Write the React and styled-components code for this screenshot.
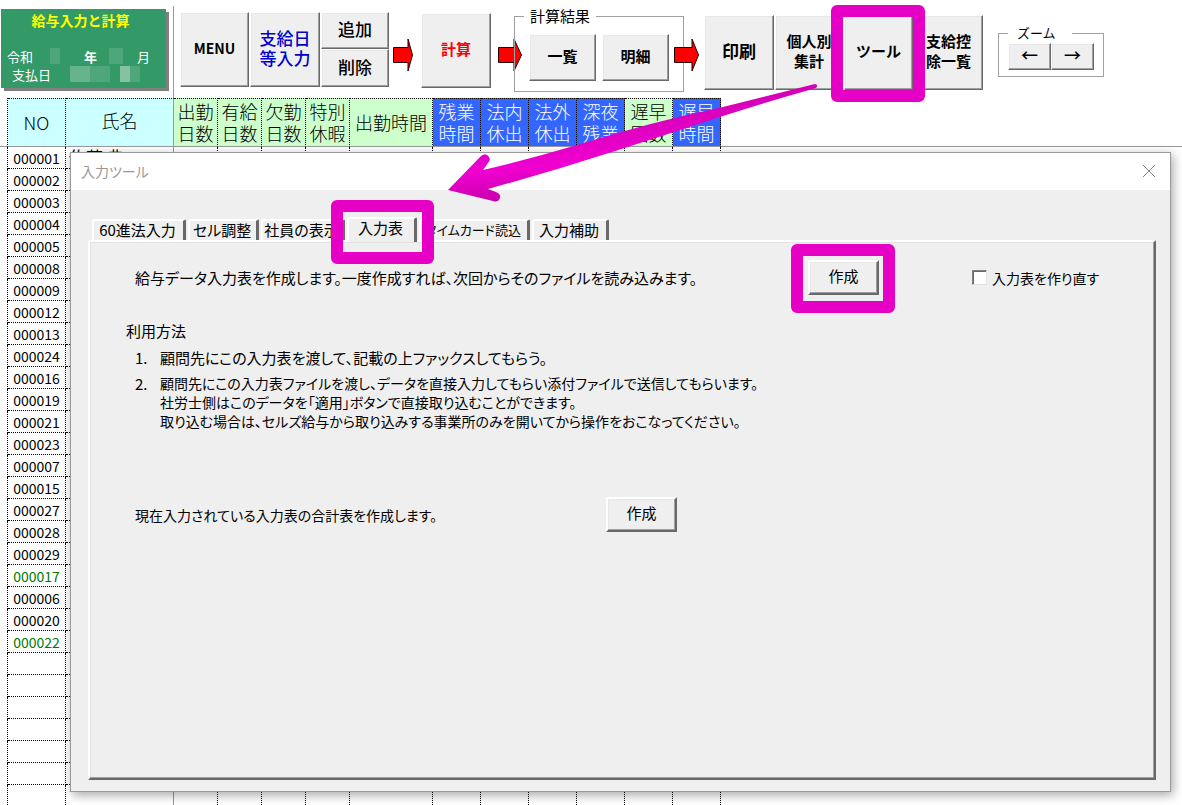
import React, {useState} from "react"
import styled, {createGlobalStyle} from "styled-components";

const GlobalStyle = createGlobalStyle`
* { box-sizing: border-box; }
html, body, #root { height: 100%; }
body {
  margin: 0;
  overflow: hidden;
  background: #fff;
  color: #000;
  font-family: "Noto Sans CJK JP", "Liberation Sans", sans-serif;
}
button, input, legend { font-family: inherit; }
`

const Page = styled.div`
position: relative;
height: 100%;
overflow: hidden;
`

const Toolbar = styled.header`
display: flex;
align-items: flex-start;
height: 98px;
padding-top: 6px;
white-space: nowrap;
`

const CardArea = styled.div`
flex: none;
width: 174px;
height: 100%;
padding: 3px 0 0 1px;
border-right: 1px solid #999;
`

const Card = styled.div`
width: 165px;
height: 79px;
padding-top: 2px;
background: #339966;
box-shadow: 3px 3px 0 #808080;
color: #fff;
font-size: 13px;
  h1{
  margin: 0 0 17px;
  padding-right: 6px;
  text-align: center;
  font-size: 14px;
  line-height: 19px;
  font-weight: 700;
  color: #ffff00;
  }
`

const CardLine = styled.div`
display: flex;
align-items: center;
height: 18px;
padding-left: ${(props)=> props.$indent}px;
`

const Masked = styled.span`
width: ${(props)=> props.$w}px;
height: 16px;
margin: 0 ${(props)=> props.$after}px 0 ${(props)=> props.$before}px;
background: ${(props)=> props.$tone || "#4fa67b"};
`

const Tools = styled.div`
display: flex;
align-items: flex-start;
gap: 1px;
padding: ${(props)=> props.$top}px 0 0 ${(props)=> props.$left || 0}px;
`

const Stack = styled.div`
display: flex;
flex-direction: column;
`

const Button = styled.button`
flex: none;
width: ${(props)=> props.$w}px;
height: ${(props)=> props.$h}px;
padding: 0 0 3px;
border: ${(props)=> props.$edge || 1}px solid;
border-color: #fff #696969 #696969 #fff;
box-shadow: inset -1px -1px #a0a0a0, inset 1px 1px #e8e8e8;
background: #efefef;
color: ${(props)=> props.$color || "#000"};
font-size: ${(props)=> props.$size || 15}px;
line-height: 20px;
font-weight: ${(props)=> props.$weight || 700};
white-space: pre-line;
`

const ArrowIcon = styled.svg`
position: relative;
flex: none;
margin: 32px ${(props)=> props.$after}px 0 ${(props)=> props.$before}px;
`

const Group = styled.fieldset`
position: relative;
flex: none;
min-width: 0;
margin: ${(props)=> props.$top}px 0 0 ${(props)=> props.$left || 0}px;
padding: 0 9px;
border: 1px solid #a0a0a0;
  legend{
  padding: ${(props)=> props.$legend};
  font-size: ${(props)=> props.$size}px;
  line-height: 16px;
  }
  div{
  display: flex;
  gap: ${(props)=> props.$gap || 0}px;
  padding: ${(props)=> props.$pad};
  }
`

/* 注目させたいボタンやタブを囲む枠 */
const Marked = styled.span`
position: relative;
z-index: ${(props)=> props.$level || 1};
display: flex;
  &::after{
  content: "";
  position: absolute;
  inset: ${(props)=> props.$inset};
  border: 12px solid #e600c6;
  border-radius: 6px;
  pointer-events: none;
  }
`

const Sheet = styled.table`
width: 100%;
table-layout: fixed;
border-spacing: 0;
border-collapse: separate;
  th, td{
  padding: 0;
  border-right: 1px dotted #000;
  border-bottom: 1px dotted #000;
  font-weight: 400;
  white-space: pre-line;
  overflow: hidden;
  }
  th{
  height: 49px;
  padding-bottom: 2px;
  border-top: 1px dotted #000;
  border-bottom: 1px solid #999;
  font-size: 18px;
  line-height: 22px;
  font-weight: 300;
  }
  td{
  height: 22px;
  font-size: 14px;
  line-height: 19px;
  text-align: center;
  vertical-align: top;
  }
  .name{ border-right: 1px solid #999; text-align: left; padding-left: 3px; font-size: 17px; }
  th.name{ padding: 0 0 6px; text-align: center; font-size: 18px; }
  .gutter{ width: 8px; border-top: none; }
  td.gutter{ border-bottom: none; }
  .rest{ border-top: none; border-right: none; }
  td.rest{ border-bottom: none; }
`

const HeadCell = styled.th`
width: ${(props)=> props.$w}px;
background: ${(props)=> props.$bg};
color: ${(props)=> props.$bg === "#3366ff" ? "#fff" : "#000"};
`

const NoCell = styled.td`
color: ${(props)=> props.$green ? "#007a00" : "#000"};
  ${Sheet} &{ padding-top: 2px; }
`

const Dialog = styled.section`
position: absolute;
inset: 152px 11px 13px 70px;
display: flex;
flex-direction: column;
padding-bottom: 11px;
border: 1px solid #999;
background: #efefef;
box-shadow: 2px 3px 10px rgba(0,0,0,0.35);
font-size: 15px;
font-feature-settings: "palt";
white-space: nowrap;
`

const TitleBar = styled.div`
display: flex;
align-items: center;
justify-content: space-between;
height: 37px;
padding: 0 14px 2px 10px;
background: #fff;
color: #999;
  h2{
  margin: 0;
  font-size: 14px;
  line-height: 16px;
  font-weight: 400;
  }
  button{
  display: flex;
  padding: 0;
  border: none;
  background: none;
  }
`

const TabList = styled.div`
display: flex;
align-items: flex-end;
gap: 2px;
margin: 27px 0 0 21px;
height: 23px;
`

const Tab = styled.button`
width: ${(props)=> props.$w}px;
height: ${(props)=> props.$active ? 25 : 21}px;
margin-bottom: ${(props)=> props.$active ? -2 : 0}px;
padding: 0 2px ${(props)=> props.$active ? 8 : 3}px 0;
border: 2px solid;
border-width: 2px 3px 0 2px;
border-color: #fff #696969 #fff #fff;
border-radius: 3px 2px 0 0;
background: #efefef;
color: #000;
font-size: ${(props)=> props.$size || 15}px;
line-height: 17px;
font-feature-settings: "palt";
`

const Panel = styled.div`
flex: 1;
margin: 0 14px 0 17px;
padding: 18px 0 0 36px;
border: 2px solid;
border-color: #fff #696969 #696969 #fff;
box-shadow: inset -1px -1px #a0a0a0, inset 1px 1px #e3e3e3;
  h3{
  margin: 26px 0 7px;
  font-size: 15px;
  line-height: 20px;
  font-weight: 400;
  }
  ol{
  display: grid;
  gap: 7px;
  margin: 0 0 66px;
  padding: 0 0 0 9px;
  list-style: none;
  }
`

const Step = styled.li`
display: flex;
font-size: ${(props)=> props.$size}px;
line-height: 19px;
  span{
  width: 25px;
  font-size: 15px;
  }
  p{
  margin: 0;
  white-space: pre-line;
  }
`

const CreateRow = styled.div`
display: grid;
grid-template-columns: minmax(0,1fr) 71px 182px;
column-gap: 93px;
align-items: center;
padding-left: 9px;
  p{ margin: 0; }
`

const TotalRow = styled.div`
display: grid;
grid-template-columns: 471px 71px;
align-items: center;
padding-left: 9px;
font-size: 14px;
  p{ margin: 0; }
`

const Check = styled.label`
display: flex;
align-items: center;
gap: 5px;
font-size: 14px;
  input{
  appearance: none;
  width: 15px;
  height: 15px;
  margin: 0;
  border: 1px solid;
  border-color: #808080 #e3e3e3 #e3e3e3 #808080;
  box-shadow: inset 1px 1px #696969;
  background: #fff;
  }
  input:checked{ background: #696969; }
`

const Pointer = styled.svg`
position: absolute;
top: 75px;
left: 440px;
pointer-events: none;
`

const GREEN = "#ccffcc"
const BLUE = "#3366ff"
const CYAN = "#ccffff"

const columns = [
    {label: "NO", w: 58, bg: CYAN},
    {label: "氏名", w: 108, bg: CYAN, name: true},
    {label: "出勤\n日数", w: 44, bg: GREEN},
    {label: "有給\n日数", w: 44, bg: GREEN},
    {label: "欠勤\n日数", w: 44, bg: GREEN},
    {label: "特別\n休暇", w: 44, bg: GREEN},
    {label: "出勤時間", w: 83, bg: GREEN},
    {label: "残業\n時間", w: 48, bg: BLUE},
    {label: "法内\n休出", w: 48, bg: BLUE},
    {label: "法外\n休出", w: 48, bg: BLUE},
    {label: "深夜\n残業", w: 48, bg: BLUE},
    {label: "遅早\n回数", w: 48, bg: GREEN},
    {label: "遅早\n時間", w: 48, bg: BLUE},
]

const numbers = [
    "000001", "000002", "000003", "000004", "000005", "000008", "000009", "000012",
    "000013", "000024", "000016", "000019", "000021", "000023", "000007", "000015",
    "000027", "000028", "000029", "000017", "000006", "000020", "000022",
    "", "", "", "", "", "", "",
]
const greenNumbers = ["000017", "000022"]
const firstRow = {1: "佐藤 典", 2: "20", 7: "10:00"}

const tabs = [
    {label: "60進法入力", w: 94},
    {label: "セル調整", w: 71},
    {label: "社員の表示", w: 84},
    {label: "入力表", w: 70},
    {label: "タイムカード読込", w: 111, size: 13},
    {label: "入力補助", w: 77},
]

const Arrow = ({body, head, before, after}) => (
    <ArrowIcon width={body + head} height="34" $before={before} $after={after} aria-hidden="true">
        <path
            d={`M0.5 9.5H${body}L${body} 1L${body + head - 0.5} 17L${body} 33V24.5H0.5Z`}
            fill="#ff0000" stroke="#200"/>
    </ArrowIcon>
)

const App = () => {
    const [active, setActive] = useState("入力表")
    const [remake, setRemake] = useState(false)

    const renderTab = (tab) => (
        <Tab
            key={tab.label}
            type="button"
            role="tab"
            aria-selected={active === tab.label}
            $w={tab.w}
            $size={tab.size}
            $active={active === tab.label}
            onClick={() => setActive(tab.label)}>{tab.label}</Tab>
    )

    return (
        <>
            <GlobalStyle/>
            <Page>
                <Toolbar>
                    <CardArea>
                        <Card>
                            <h1>給与入力と計算</h1>
                            <CardLine $indent={6}>
                                令和
                                <Masked $w={10} $before={17} $after={24}/>
                                <b>年</b>
                                <Masked $w={14} $before={12} $after={14}/>
                                月
                            </CardLine>
                            <CardLine $indent={11}>
                                支払日
                                <Masked $w={20} $before={19} $after={0} $tone="#66b38c"/>
                                <Masked $w={20} $before={0} $after={10}/>
                                <Masked $w={10} $before={0} $after={0} $tone="#84c2a3"/>
                                <Masked $w={10} $before={0} $after={0}/>
                            </CardLine>
                        </Card>
                    </CardArea>
                    <Tools $top={6} $left={6}>
                        <Button $w={69} $h={75} $size={14}>MENU</Button>
                        <Button $w={70} $h={75} $size={17} $weight={500} $color="#0000cc">{"支給日\n等入力"}</Button>
                        <Stack>
                            <Button $w={68} $h={37} $size={17} $weight={500}>追加</Button>
                            <Button $w={68} $h={38} $size={17} $weight={500}>削除</Button>
                        </Stack>
                    </Tools>
                    <Arrow body={15} head={5} before={4} after={8}/>
                    <Tools $top={7}>
                        <Button $w={70} $h={75} $color="#ff0000">計算</Button>
                    </Tools>
                    <Arrow body={16} head={8} before={7} after={-8}/>
                    <Group $top={2} $size={15} $legend="0 6px" $gap={6} $pad="10px 5px">
                        <legend>計算結果</legend>
                        <div>
                            <Button $w={67} $h={47}>一覧</Button>
                            <Button $w={67} $h={47}>明細</Button>
                        </div>
                    </Group>
                    <Arrow body={18} head={7} before={-10} after={5}/>
                    <Tools $top={9}>
                        <Button $w={70} $h={75} $size={17}>印刷</Button>
                        <Button $w={68} $h={75}>{"個人別\n集計"}</Button>
                        <Marked $inset="-10px -12px -12px -13px" $level={2}>
                            <Button $w={69} $h={75}>ツール</Button>
                        </Marked>
                        <Button $w={69} $h={75}>{"支給控\n除一覧"}</Button>
                    </Tools>
                    <Group $top={19} $left={15} $size={13} $legend="0 16px 0 9px" $pad="2px 0 6px">
                        <legend>ズーム</legend>
                        <div>
                            <Button $w={43} $h={27} $size={17} $weight={500} aria-label="縮小">←</Button>
                            <Button $w={43} $h={27} $size={17} $weight={500} aria-label="拡大">→</Button>
                        </div>
                    </Group>
                </Toolbar>

                <Sheet>
                    <thead>
                        <tr>
                            <th className="gutter"/>
                            {columns.map((col, i) => (
                                <HeadCell key={i} className={col.name ? "name" : ""} $w={col.w} $bg={col.bg}>
                                    {col.label}
                                </HeadCell>
                            ))}
                            <th className="rest"/>
                        </tr>
                    </thead>
                    <tbody>
                        {numbers.map((no, row) => (
                            <tr key={row}>
                                <td className="gutter"/>
                                <NoCell $green={greenNumbers.includes(no)}>{no}</NoCell>
                                {columns.slice(1).map((col, i) => (
                                    <td key={i} className={col.name ? "name" : ""}>
                                        {row === 0 ? firstRow[i + 1] : ""}
                                    </td>
                                ))}
                                <td className="rest"/>
                            </tr>
                        ))}
                    </tbody>
                </Sheet>

                <Dialog role="dialog" aria-labelledby="tool-title">
                    <TitleBar>
                        <h2 id="tool-title">入力ツール</h2>
                        <button type="button" aria-label="閉じる">
                            <svg width="14" height="14" viewBox="0 0 14 14">
                                <path d="M1 1L13 13M13 1L1 13" stroke="#888" fill="none"/>
                            </svg>
                        </button>
                    </TitleBar>
                    <TabList role="tablist">
                        {tabs.map((tab) => tab.label === "入力表"
                            ? <Marked key={tab.label} $inset="-17px -17px -24px -16px">{renderTab(tab)}</Marked>
                            : renderTab(tab))}
                    </TabList>
                    <Panel role="tabpanel">
                        <CreateRow>
                            <p>給与データ入力表を作成します。一度作成すれば、次回からそのファイルを読み込みます。</p>
                            <Marked $inset="-16px -16px -18px -17px">
                                <Button $w={71} $h={35} $edge={2} $weight={400}>作成</Button>
                            </Marked>
                            <Check>
                                <input
                                    type="checkbox"
                                    checked={remake}
                                    onChange={(e) => setRemake(e.target.checked)}/>
                                入力表を作り直す
                            </Check>
                        </CreateRow>
                        <h3>利用方法</h3>
                        <ol>
                            <Step $size={15}>
                                <span>1.</span>
                                <p>顧問先にこの入力表を渡して、記載の上ファックスしてもらう。</p>
                            </Step>
                            <Step $size={14}>
                                <span>2.</span>
                                <p>{"顧問先にこの入力表ファイルを渡し、データを直接入力してもらい添付ファイルで送信してもらいます。\n社労士側はこのデータを「適用」ボタンで直接取り込むことができます。\n取り込む場合は、セルズ給与から取り込みする事業所のみを開いてから操作をおこなってください。"}</p>
                            </Step>
                        </ol>
                        <TotalRow>
                            <p>現在入力されている入力表の合計表を作成します。</p>
                            <Button $w={71} $h={35} $edge={2} $weight={400}>作成</Button>
                        </TotalRow>
                    </Panel>
                </Dialog>

                <Pointer width="390" height="135" viewBox="440 75 390 135" aria-hidden="true">
                    <defs>
                        <linearGradient id="shaft" x1="0" y1="0" x2="0.25" y2="1">
                            <stop offset="0" stopColor="#c800ac"/>
                            <stop offset="0.5" stopColor="#e000c2"/>
                            <stop offset="0.72" stopColor="#f000d0"/>
                            <stop offset="1" stopColor="#c400a8"/>
                        </linearGradient>
                    </defs>
                    <path
                        d="M448 190L481 156Q486 152 489 157Q491 160 488 163L483 170Q530 159 577 145Q655 121 723 107Q775 94 815 84Q819 85 816 88Q770 101 723 116Q665 135 612 152Q550 172 488 189L496 192Q501 194 500 198Q498 203 493 201Z"
                        fill="url(#shaft)"/>
                </Pointer>
            </Page>
        </>
    )
}
export default App
